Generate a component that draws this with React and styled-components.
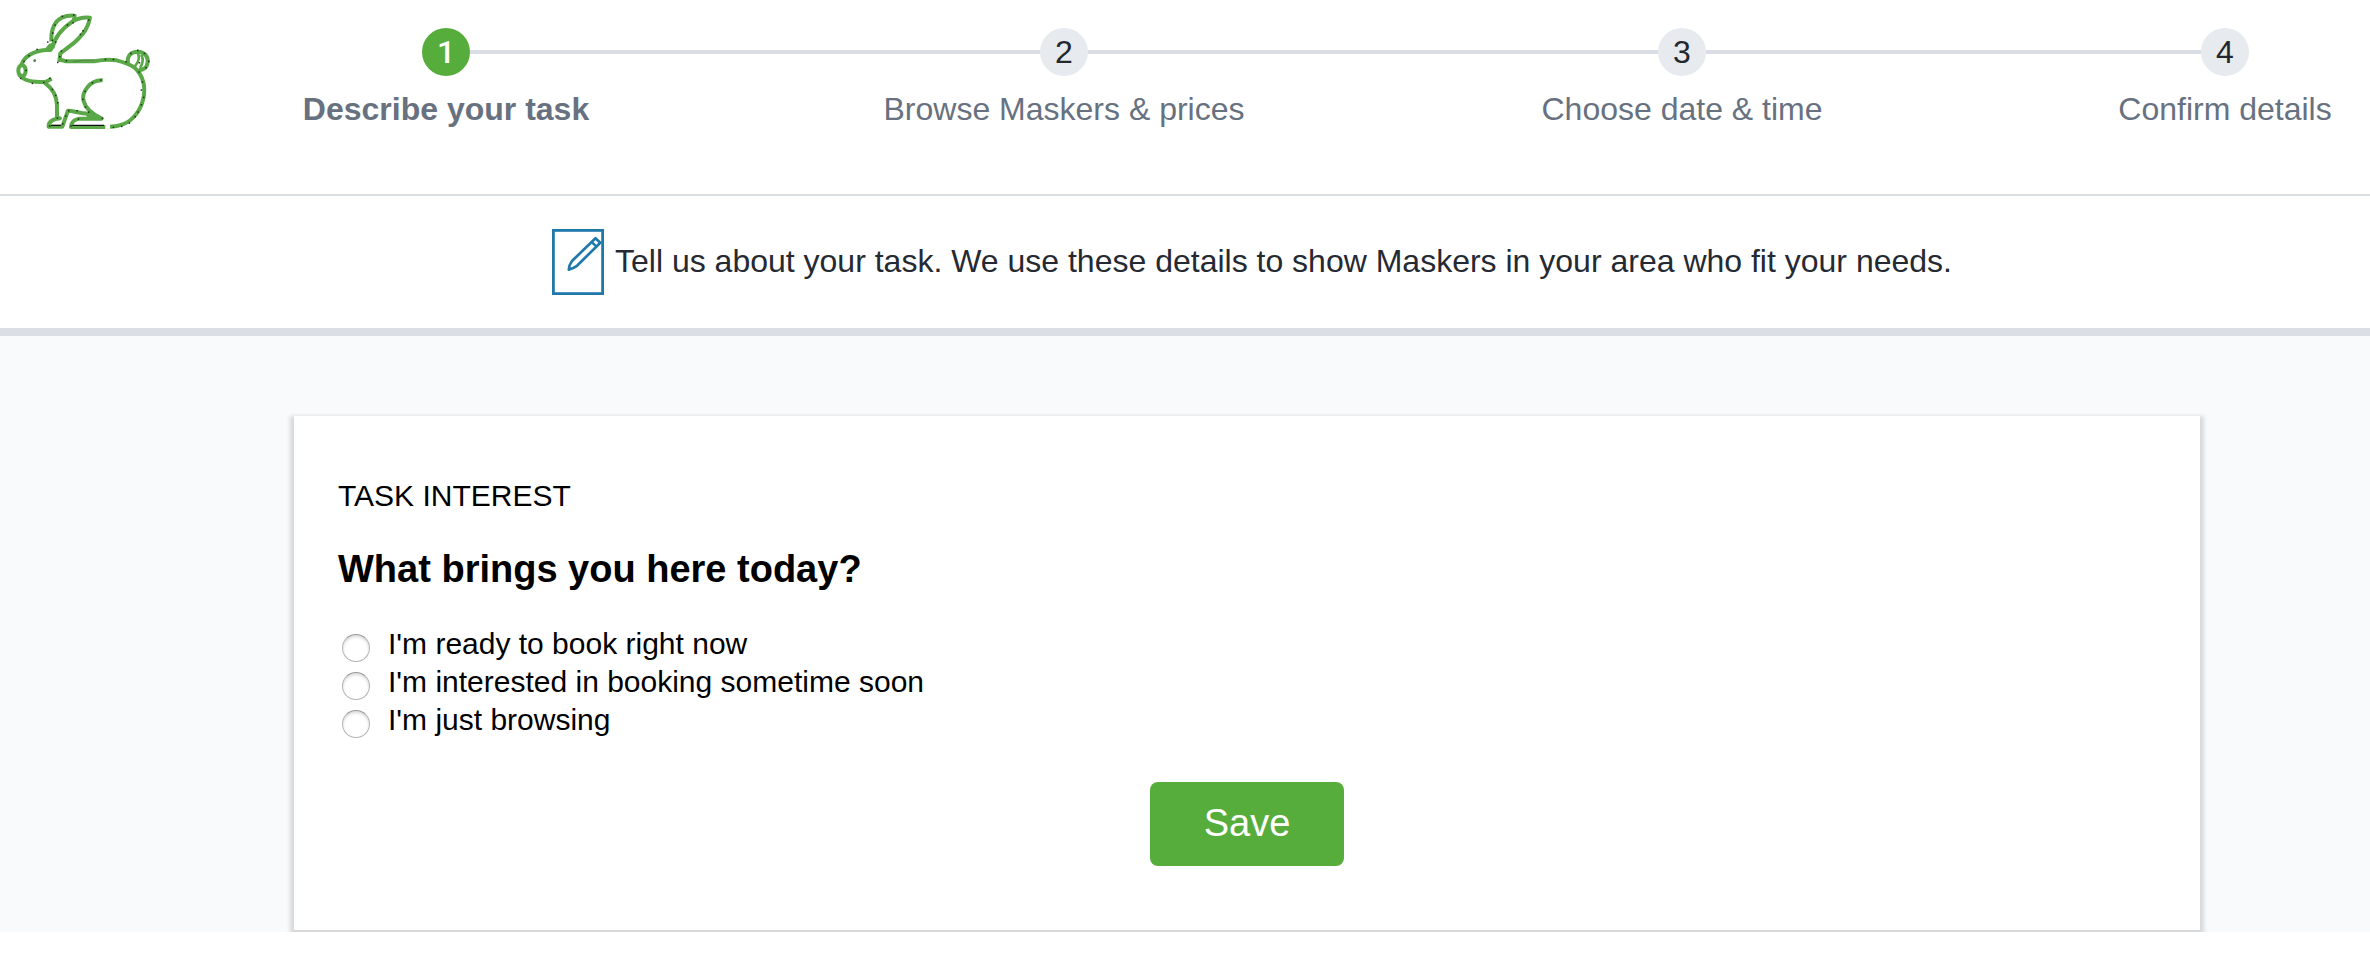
import React, { useState } from "react";
import styled, { createGlobalStyle } from "styled-components";

const GlobalStyle = createGlobalStyle`
  * { box-sizing: border-box; }
  body {
    margin: 0;
    background: #fff;
    font-family: "Liberation Sans", Arial, Helvetica, sans-serif;
  }
`;

const Page = styled.div`
  width: 2370px;
  height: 960px;
  overflow: hidden;
  background: #fff;
`;

const Header = styled.header`
  display: flex;
  align-items: flex-start;
  height: 196px;
  border-bottom: 2px solid #dadfe4;
`;

const Logo = styled.svg`
  flex: none;
  width: 200px;
  height: 150px;
`;

const Steps = styled.nav`
  display: grid;
  grid-template-columns: 48px 570px 48px 570px 48px 495px 48px;
  grid-template-rows: 48px 36px;
  row-gap: 15px;
  margin: 28px 0 0 222px;
`;

const Badge = styled.span`
  grid-row: 1;
  grid-column: ${(p) => p.$column};
  width: 48px;
  height: 48px;
  border-radius: 50%;
  background: ${(p) => (p.$active ? "#57ad3c" : "#e7ebf0")};
  color: ${(p) => (p.$active ? "#fff" : "#24272c")};
  font-family: ${(p) => (p.$active ? "Roboto" : '"Liberation Sans"')}, sans-serif;
  font-size: 32px;
  font-weight: ${(p) => (p.$active ? 500 : 400)};
  line-height: 48px;
  text-align: center;
`;

const Connector = styled.span`
  grid-row: 1;
  grid-column: ${(p) => p.$column};
  align-self: center;
  height: 4px;
  background: #dadee4;
`;

const StepLabel = styled.span`
  grid-row: 2;
  grid-column: ${(p) => p.$column};
  justify-self: center;
  color: #67717f;
  font-size: 32px;
  font-weight: ${(p) => (p.$active ? 700 : 400)};
  line-height: 36px;
  white-space: nowrap;
`;

const Banner = styled.section`
  display: flex;
  align-items: center;
  gap: 11px;
  height: 140px;
  padding-left: 552px;
  border-bottom: 8px solid #dcdee6;
`;

const NoteIcon = styled.svg`
  flex: none;
  width: 52px;
  height: 66px;
`;

const BannerText = styled.p`
  margin: 0;
  padding-bottom: 2px;
  color: #252a32;
  font-size: 32px;
  line-height: 36px;
  white-space: nowrap;
`;

const Main = styled.main`
  height: 596px;
  padding: 80px 170px 0 294px;
  overflow: hidden;
  background: #f9fafc;
`;

const Card = styled.form`
  display: flex;
  flex-direction: column;
  height: 514px;
  padding: 63px 44px 0;
  background: #fff;
  box-shadow: 0 4px 4px 4px rgba(0, 0, 0, 0.135);
  color: #000;
`;

const Eyebrow = styled.div`
  font-size: 30px;
  line-height: 34px;
`;

const Question = styled.h2`
  margin: 35px 0;
  font-size: 38px;
  font-weight: 700;
  line-height: 42px;
`;

const Option = styled.label`
  display: flex;
  align-items: flex-start;
  height: 38px;
  padding-left: 4px;
  font-size: 30px;
  line-height: 38px;
`;

const Radio = styled.input`
  appearance: none;
  flex: none;
  width: 28px;
  height: 28px;
  margin: 9px 18px 0 0;
  border: 1px solid #b4b4b4;
  border-top-color: #999;
  border-radius: 50%;
  background: #fff;
  box-shadow: inset 0 2px 3px rgba(0, 0, 0, 0.15);
  &:checked { background: radial-gradient(#57ad3c 35%, #fff 40%); }
`;

const SaveButton = styled.button`
  align-self: center;
  width: 194px;
  height: 84px;
  margin-top: 43px;
  padding: 0 0 2px;
  border: 0;
  border-radius: 8px;
  background: #57ad3c;
  color: #fff;
  font: 38px/42px "Liberation Sans", Arial, sans-serif;
`;

const STEPS = [
  "Describe your task",
  "Browse Maskers & prices",
  "Choose date & time",
  "Confirm details",
];

const OPTIONS = [
  "I'm ready to book right now",
  "I'm interested in booking sometime soon",
  "I'm just browsing",
];

// Dark specks scattered along the rabbit's outline.
const SPECKS = [
  [187, 49], [221, 45], [165, 75], [158, 99], [143, 126], [157, 121], [167, 126],
  [202, 75], [219, 68], [266, 60], [249, 92], [241, 103], [184, 153], [179, 170],
  [173, 187], [111, 148], [87, 167], [72, 184], [78, 211], [62, 235], [97, 250],
  [131, 247], [149, 235], [157, 268], [167, 286], [173, 308], [199, 182], [316, 178],
  [340, 178], [378, 185], [392, 160], [413, 151], [433, 160], [446, 184], [438, 203],
  [417, 216], [427, 246], [424, 270], [431, 292], [424, 314], [414, 336], [405, 350],
  [388, 369], [365, 379], [340, 382], [302, 240], [277, 248], [255, 274], [248, 298],
  [256, 321], [266, 336], [231, 332], [206, 332], [197, 348], [188, 371], [307, 355],
  [235, 357], [213, 378], [149, 378], [172, 354], [418, 188],
];

function Rabbit() {
  return (
    <Logo viewBox="0 0 600 450" role="img" aria-label="Rabbit">
      <g fill="none" stroke="#5aa848" strokeWidth="12" strokeLinejoin="round">
        <path d="M154 124 C153 91 163 64 185 53 Q204 45 224 47 L221 63" />
        <path d="M157 145 C163 113 187 85 218 64 Q242 50 270 53 C265 82 252 101 224 127 L181 160 L178 185" />
        <path d="M164 124 L152 150 C102 147 64 174 64 202" />
        <ellipse cx="66" cy="212" rx="11" ry="17" />
        <path d="M58 222 C69 247 109 247 138 245 L155 236" />
        <path d="M133 247 C157 265 171 286 171 316 L171 353 L180 355 C156 358 145 367 146 380 L187 380 L204 332 C221 331 232 341 270 341" />
        <path d="M176 180 Q188 180 198 184 L283 184 Q318 177 350 181 Q386 190 404 203 C459 252 428 350 371 372 Q353 380 330 380" />
        <path d="M308 241 C269 239 244 278 251 303 Q258 333 305 356 L237 356 Q213 361 213 381 L316 381" />
        <path d="M384 190 C380 167 394 155 413 155 C434 155 445 170 443 187 C441 203 430 211 416 210" />
        <path d="M413 158 C419 170 417 186 405 198" strokeWidth="8" />
        <path d="M424 164 Q434 184 420 204" strokeWidth="8" />
      </g>
      <path d="M132 149 L147 132 L165 125 L158 150Z M250 337 L276 339 L305 356 L262 352Z" fill="#5aa848" />
      <path d="M217 376H312M153 376H183" stroke="#111" strokeWidth="4" />
      <path d="M220 185 Q250 178 283 180" fill="none" stroke="#52704b" strokeWidth="2" />
      <circle cx="104" cy="182" r="4" fill="#42823b" />
      {SPECKS.map(([x, y]) => (
        <rect key={`${x}-${y}`} x={x - 2} y={y - 2} width="4.5" height="4.5" fill="#1d331a" />
      ))}
    </Logo>
  );
}

function PencilNote() {
  return (
    <NoteIcon viewBox="0 0 52 66" fill="none" stroke="#2179ab" aria-hidden="true">
      <rect x="1.4" y="1.4" width="49.2" height="63.2" strokeWidth="2.8" />
      <path d="M16.8 40.6 Q17 36 20 32 L43.5 9.2 L48.3 13.8 L25 36.8 Q21 39.5 16.8 40.6 Z" strokeWidth="2.7" strokeLinejoin="round" />
      <path d="M39.6 13 L44.6 17.6" strokeWidth="2.4" />
    </NoteIcon>
  );
}

export default function App() {
  const [choice, setChoice] = useState(null);
  return (
    <Page>
      <GlobalStyle />
      <Header>
        <Rabbit />
        <Steps>
          {STEPS.map((label, i) => (
            <React.Fragment key={label}>
              <Badge $column={i * 2 + 1} $active={i === 0}>{i + 1}</Badge>
              {i < STEPS.length - 1 && <Connector $column={i * 2 + 2} />}
              <StepLabel $column={i * 2 + 1} $active={i === 0}>{label}</StepLabel>
            </React.Fragment>
          ))}
        </Steps>
      </Header>
      <Banner>
        <PencilNote />
        <BannerText>
          Tell us about your task. We use these details to show Maskers in your area who fit your needs.
        </BannerText>
      </Banner>
      <Main>
        <Card onSubmit={(e) => e.preventDefault()}>
          <Eyebrow>TASK INTEREST</Eyebrow>
          <Question>What brings you here today?</Question>
          {OPTIONS.map((text) => (
            <Option key={text}>
              <Radio
                type="radio"
                name="interest"
                checked={choice === text}
                onChange={() => setChoice(text)}
              />
              {text}
            </Option>
          ))}
          <SaveButton type="submit">Save</SaveButton>
        </Card>
      </Main>
    </Page>
  );
}
